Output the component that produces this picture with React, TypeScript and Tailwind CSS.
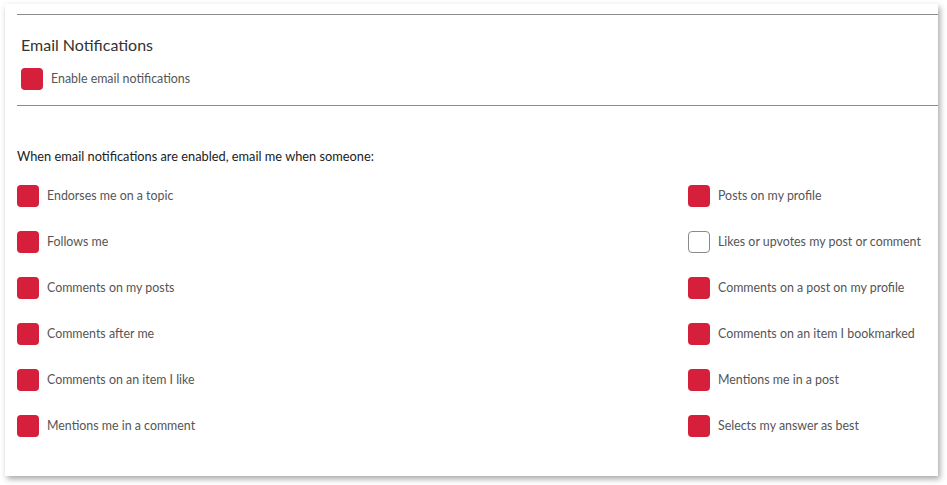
import { useState } from 'react';

type Item = { label: string; checked: boolean };

const leftItems: Item[] = [
  { label: 'Endorses me on a topic', checked: true },
  { label: 'Follows me', checked: true },
  { label: 'Comments on my posts', checked: true },
  { label: 'Comments after me', checked: true },
  { label: 'Comments on an item I like', checked: true },
  { label: 'Mentions me in a comment', checked: true },
];

const rightItems: Item[] = [
  { label: 'Posts on my profile', checked: true },
  { label: 'Likes or upvotes my post or comment', checked: false },
  { label: 'Comments on a post on my profile', checked: true },
  { label: 'Comments on an item I bookmarked', checked: true },
  { label: 'Mentions me in a post', checked: true },
  { label: 'Selects my answer as best', checked: true },
];

function Box({ checked, onClick }: { checked: boolean; onClick: () => void }) {
  return (
    <button
      onClick={onClick}
      className={
        checked
          ? 'w-[22px] h-[22px] rounded-[4px] bg-[#d51f3b] flex-shrink-0'
          : 'w-[22px] h-[22px] rounded-[4px] bg-white border border-[#8a8a8a] flex-shrink-0'
      }
    />
  );
}

function Column({ items, className }: { items: Item[]; className: string }) {
  const [state, setState] = useState(items.map((i) => i.checked));
  return (
    <div className={className}>
      {items.map((item, idx) => (
        <div key={item.label} className="flex items-center h-[22px] mb-[24px]">
          <Box
            checked={state[idx]}
            onClick={() => setState(state.map((v, j) => (j === idx ? !v : v)))}
          />
          <span className="ml-[8px] text-[12.4px] text-[#555] leading-none">{item.label}</span>
        </div>
      ))}
    </div>
  );
}

export default function App() {
  const [enabled, setEnabled] = useState(true);

  return (
    <div className="min-h-screen bg-white pt-[4px] pl-[5px]" style={{ fontFamily: 'Lato, "Open Sans", sans-serif' }}>
      <div className="w-[933px] h-[472px] bg-white shadow-[2px_3px_6px_rgba(0,0,0,0.35)] pl-[12px] pt-[10px]">
        <div className="border-t border-[#8c8c8c]" />

        <div className="pl-[4px] pt-[22px]">
          <h2 className="text-[16px] text-[#333] leading-none">Email Notifications</h2>
          <div className="flex items-center mt-[15px]">
            <Box checked={enabled} onClick={() => setEnabled(!enabled)} />
            <span className="ml-[8px] text-[12.4px] text-[#555] leading-none">Enable email notifications</span>
          </div>
        </div>

        <div className="border-t border-[#8c8c8c] mt-[15px]" />

        <p className="mt-[44px] text-[12.8px] text-[#222] leading-none">
          When email notifications are enabled, email me when someone:
        </p>

        <div className="flex mt-[22px]">
          <Column items={leftItems} className="w-[671px]" />
          <Column items={rightItems} className="flex-1" />
        </div>
      </div>
    </div>
  );
}
